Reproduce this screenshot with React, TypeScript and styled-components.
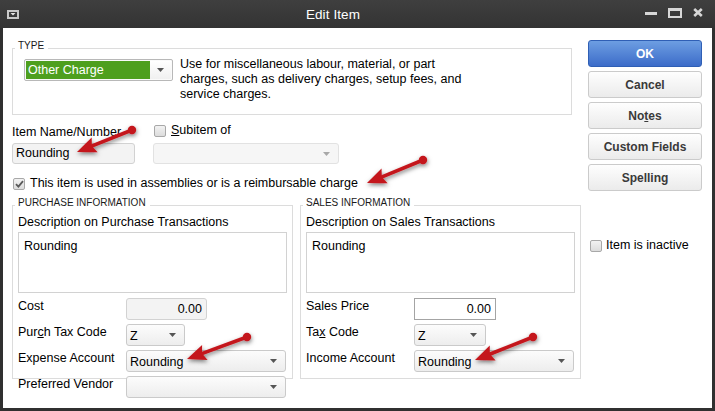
import React from "react";
import styled, { createGlobalStyle } from "styled-components";

const Global = createGlobalStyle`
  html, body { margin: 0; padding: 0; background: #ffffff; }
  body { font-family: "Liberation Sans", Arial, sans-serif; font-size: 12.5px; color: #000; }
  * { box-sizing: border-box; }
`;

const Window = styled.div`
  position: relative;
  width: 715px;
  height: 411px;
  display: flex;
  flex-direction: column;
  background: #303030;
  overflow: hidden;
`;

const TitleBar = styled.div`
  height: 28px;
  flex: none;
  display: flex;
  align-items: center;
  padding: 0 12px 0 7px;
  background: linear-gradient(#3f3f3f, #333333);
  color: #ffffff;
`;

const Title = styled.div`
  flex: 1;
  text-align: center;
  padding-left: 2px;
  font-size: 13.5px;
  letter-spacing: 0.1px;
`;

const Controls = styled.div`
  display: flex;
  align-items: center;
  gap: 11px;
`;

const Body = styled.div`
  flex: 1;
  display: flex;
  margin: 0 3px 3px 3px;
  padding-left: 9px;
  background: #ffffff;
`;

const MainCol = styled.div`
  width: 569px;
  display: flex;
  flex-direction: column;
  padding-top: 20px;
`;

const SideCol = styled.div`
  width: 114px;
  margin-left: 7px;
  padding-top: 12px;
  display: flex;
  flex-direction: column;
  gap: 4px;
`;

const Group = styled.div<{ $w: number }>`
  width: ${(p) => p.$w}px;
  border: 1px solid #dcdcdc;
  display: flex;
  flex-direction: column;
  background: #ffffff;
`;

const Legend = styled.div`
  align-self: flex-start;
  margin: -9px 0 0 2px;
  padding: 0 4px 0 3px;
  background: #ffffff;
  font-size: 10px;
  line-height: 12px;
  color: #1a1a1a;
`;

const TypeBody = styled.div`
  display: flex;
  align-items: flex-start;
  gap: 7px;
  padding: 5px 11px 12px 11px;
`;

const TypeSelect = styled.div`
  width: 149px;
  height: 22px;
  margin-top: 2px;
  flex: none;
  display: flex;
  border: 1px solid #b8b8b8;
  border-radius: 2px;
  padding: 1px;
  background: #fafafa;
`;

const TypeValue = styled.div`
  flex: 1;
  background: #4e9f1e;
  color: #ffffff;
  padding-left: 2px;
  line-height: 18px;
`;

const CaretBox = styled.div`
  width: 21px;
  display: flex;
  align-items: center;
  justify-content: center;
  background: linear-gradient(#ffffff, #f0f0f0);
`;

const TypeText = styled.div`
  line-height: 15px;
  width: 380px;
`;

const NameRow = styled.div`
  display: flex;
  gap: 18px;
  margin-top: 7px;
`;

const Col = styled.div<{ $w: number; $pt?: number }>`
  width: ${(p) => p.$w}px;
  padding-top: ${(p) => p.$pt ?? 0}px;
  display: flex;
  flex-direction: column;
`;

const Label = styled.div<{ $pt?: number }>`
  line-height: 15px;
  padding-top: ${(p) => p.$pt ?? 0}px;
  white-space: nowrap;
`;

const Field = styled.div<{ $w: number; $h?: number; $mt?: number; $right?: boolean; $white?: boolean }>`
  width: ${(p) => p.$w}px;
  height: ${(p) => p.$h ?? 22}px;
  margin-top: ${(p) => p.$mt ?? 0}px;
  border: 1px solid ${(p) => (p.$white ? "#a4a4a4" : "#d2d2d2")};
  border-radius: ${(p) => (p.$white ? 0 : 3)}px;
  background: ${(p) => (p.$white ? "#ffffff" : "#f3f3f3")};
  padding: 0 4px 0 3px;
  text-align: ${(p) => (p.$right ? "right" : "left")};
  line-height: ${(p) => (p.$h ?? 22) - 2}px;
`;

const Select = styled.div<{ $w: number; $h?: number; $mt?: number; $disabled?: boolean }>`
  width: ${(p) => p.$w}px;
  height: ${(p) => p.$h ?? 22}px;
  margin-top: ${(p) => p.$mt ?? 0}px;
  display: flex;
  align-items: center;
  justify-content: space-between;
  border: 1px solid ${(p) => (p.$disabled ? "#e2e2e2" : "#cacaca")};
  border-radius: 3px;
  background: ${(p) =>
    p.$disabled ? "#f6f6f6" : "linear-gradient(#fcfcfc, #ededed)"};
  padding: 0 8px 0 3px;
  position: relative;
`;

const SelectValue = styled.span`
  line-height: 20px;
  padding-top: 1px;
`;

const CheckRow = styled.div<{ $mt?: number; $ml?: number }>`
  display: flex;
  align-items: center;
  height: 15px;
  margin-top: ${(p) => p.$mt ?? 0}px;
  margin-left: ${(p) => p.$ml ?? 0}px;
  gap: 5px;
  white-space: nowrap;
`;

const Box = styled.span`
  width: 12px;
  height: 12px;
  margin-left: 1px;
  margin-top: 2px;
  flex: none;
  border: 1px solid #a8a8a8;
  border-radius: 2px;
  background: linear-gradient(#f2f2f2, #dcdcdc);
  display: flex;
  align-items: center;
  justify-content: center;
`;

const U = styled.span`
  text-decoration: underline;
  text-underline-offset: 1px;
`;

const GroupsRow = styled.div`
  display: flex;
  gap: 7px;
  margin-top: 15px;
`;

const InfoCol = styled.div`
  width: 281px;
  display: flex;
  flex-direction: column;
`;

const InfoBody = styled.div`
  display: flex;
  flex-direction: column;
  padding: 6px 5px 6px 5px;
`;

const TextArea = styled.div`
  height: 61px;
  margin-top: 2px;
  border: 1px solid #d2d2d2;
  padding: 6px 5px;
  line-height: 15px;
`;

const Rows = styled.div`
  display: flex;
  flex-direction: column;
  gap: 4px;
  margin-top: 5px;
`;

const FormRow = styled.div<{ $pl?: number; $mt?: number }>`
  display: grid;
  grid-template-columns: 108px 1fr;
  align-items: start;
  padding-left: ${(p) => p.$pl ?? 0}px;
  margin-top: ${(p) => p.$mt ?? 0}px;
`;

const Button = styled.div<{ $primary?: boolean }>`
  height: 27px;
  display: flex;
  align-items: center;
  justify-content: center;
  border-radius: 3px;
  border: 1px solid ${(p) => (p.$primary ? "#2f5fb5" : "#cbcbcb")};
  background: ${(p) =>
    p.$primary
      ? "linear-gradient(#6d9ee2, #3c6cc9)"
      : "linear-gradient(#fefefe, #ebebeb)"};
  color: ${(p) => (p.$primary ? "#ffffff" : "#3a3a3a")};
  font-weight: bold;
  font-size: 12px;
`;

const Overlay = styled.svg`
  position: absolute;
  left: 0;
  top: 0;
  pointer-events: none;
`;

const Caret = ({ color = "#555" }: { color?: string }) => (
  <svg width="7" height="4" viewBox="0 0 7 4">
    <path d="M0 0H7L3.5 4Z" fill={color} />
  </svg>
);

const Check = ({ checked }: { checked?: boolean }) => (
  <Box>
    {checked && (
      <svg width="9" height="8" viewBox="0 0 9 8">
        <path d="M1 4.2L3.4 6.6L8 1.2" stroke="#5a5a5a" strokeWidth="1.8" fill="none" />
      </svg>
    )}
  </Box>
);

type Arrow = { x1: number; y1: number; x2: number; y2: number };

const ARROWS: Arrow[] = [
  { x1: 132, y1: 130, x2: 77, y2: 152 },
  { x1: 423, y1: 160, x2: 367, y2: 183 },
  { x1: 247, y1: 337, x2: 187, y2: 359 },
  { x1: 533, y1: 337, x2: 475, y2: 360 },
];

const ArrowShape = ({ x1, y1, x2, y2 }: Arrow) => {
  const dx = x2 - x1;
  const dy = y2 - y1;
  const len = Math.hypot(dx, dy);
  const ux = dx / len;
  const uy = dy / len;
  const nx = -uy;
  const ny = ux;
  const hl = 19;
  const hw = 8;
  const bx = x2 - ux * hl;
  const by = y2 - uy * hl;
  const pts = `${x2},${y2} ${bx + nx * hw},${by + ny * hw} ${bx + ux * 3},${by + uy * 3} ${bx - nx * hw},${by - ny * hw}`;
  return (
    <g filter="url(#arrowShadow)">
      <line x1={x1} y1={y1} x2={bx + ux * 4} y2={by + uy * 4} stroke="#c4161c" strokeWidth="3.6" strokeLinecap="round" />
      <circle cx={x1} cy={y1} r="4.2" fill="#c4161c" />
      <polygon points={pts} fill="#c4161c" />
    </g>
  );
};

export default function App() {
  return (
    <>
      <Global />
      <Window>
        <TitleBar>
          <svg width="12" height="9" viewBox="0 0 12 9">
            <rect x="0" y="0" width="12" height="9" fill="#c9c9c9" />
            <rect x="2" y="2" width="8" height="5" fill="#3a3a3a" />
            <path d="M3.5 3H8.5L6 5.5Z" fill="#e6e6e6" />
          </svg>
          <Title>Edit Item</Title>
          <Controls>
            <svg width="12" height="3" viewBox="0 0 12 3" style={{ marginTop: -2 }}>
              <rect width="12" height="3" fill="#d6d6d6" />
            </svg>
            <svg width="14" height="10" viewBox="0 0 14 10" style={{ marginTop: -2 }}>
              <rect x="1" y="1.5" width="12" height="7.5" fill="none" stroke="#d6d6d6" strokeWidth="2" />
              <rect x="0" y="0" width="14" height="3" fill="#d6d6d6" />
            </svg>
            <svg width="10" height="9" viewBox="0 0 10 9" style={{ marginTop: -3 }}>
              <path d="M1.2 1L8.8 8M8.8 1L1.2 8" stroke="#d6d6d6" strokeWidth="2.6" />
            </svg>
          </Controls>
        </TitleBar>
        <Body>
          <MainCol>
            <Group $w={560}>
              <Legend>TYPE</Legend>
              <TypeBody>
                <TypeSelect>
                  <TypeValue>Other Charge</TypeValue>
                  <CaretBox>
                    <Caret />
                  </CaretBox>
                </TypeSelect>
                <TypeText>
                  Use for miscellaneous labour, material, or part
                  <br />
                  charges, such as delivery charges, setup fees, and
                  <br />
                  service charges.
                </TypeText>
              </TypeBody>
            </Group>

            <NameRow>
              <Col $w={123} $pt={3}>
                <Label>Item Name/Number</Label>
                <Field $w={123} $h={21} $mt={3}>Rounding</Field>
              </Col>
              <Col $w={186}>
                <CheckRow>
                  <Check />
                  <span>
                    <U>S</U>ubitem of
                  </span>
                </CheckRow>
                <Select $w={186} $h={21} $mt={6} $disabled>
                  <span />
                  <Caret color="#a8a8a8" />
                </Select>
              </Col>
            </NameRow>

            <CheckRow $mt={11}>
              <Check checked />
              <span>This item is used in assemblies or is a reimbursable charge</span>
            </CheckRow>

            <GroupsRow>
              <InfoCol>
                <Group $w={281}>
                  <Legend>PURCHASE INFORMATION</Legend>
                  <InfoBody>
                    <Label>Description on Purchase Transactions</Label>
                    <TextArea>Rounding</TextArea>
                    <Rows>
                      <FormRow>
                        <Label $pt={1}>Cost</Label>
                        <Field $w={81} $right>0.00</Field>
                      </FormRow>
                      <FormRow>
                        <Label $pt={1}>
                          Pur<U>c</U>h Tax Code
                        </Label>
                        <Select $w={59}>
                          <SelectValue>Z</SelectValue>
                          <Caret />
                        </Select>
                      </FormRow>
                      <FormRow>
                        <Label $pt={1}>Expense Account</Label>
                        <Select $w={160}>
                          <SelectValue>Rounding</SelectValue>
                          <Caret />
                        </Select>
                      </FormRow>
                    </Rows>
                  </InfoBody>
                </Group>
                <FormRow $pl={6} $mt={-3}>
                  <Label $pt={1}>Preferred Vendor</Label>
                  <Select $w={160}>
                    <span />
                    <Caret />
                  </Select>
                </FormRow>
              </InfoCol>

              <InfoCol>
                <Group $w={281}>
                  <Legend>SALES INFORMATION</Legend>
                  <InfoBody>
                    <Label>Description on Sales Transactions</Label>
                    <TextArea>Rounding</TextArea>
                    <Rows>
                      <FormRow>
                        <Label $pt={1}>Sales Price</Label>
                        <Field $w={82} $right $white>0.00</Field>
                      </FormRow>
                      <FormRow>
                        <Label $pt={1}>
                          Ta<U>x</U> Code
                        </Label>
                        <Select $w={72}>
                          <SelectValue>Z</SelectValue>
                          <Caret />
                        </Select>
                      </FormRow>
                      <FormRow>
                        <Label $pt={1}>Income Account</Label>
                        <Select $w={160}>
                          <SelectValue>Rounding</SelectValue>
                          <Caret />
                        </Select>
                      </FormRow>
                    </Rows>
                  </InfoBody>
                </Group>
              </InfoCol>
            </GroupsRow>
          </MainCol>

          <SideCol>
            <Button $primary>OK</Button>
            <Button>Cancel</Button>
            <Button>
              <span>
                No<U>t</U>es
              </span>
            </Button>
            <Button>Custom Fields</Button>
            <Button>
              <span>
                Spellin<U>g</U>
              </span>
            </Button>
            <CheckRow $mt={42} $ml={1}>
              <Check />
              <span style={{ marginLeft: -1 }}>Item is inactive</span>
            </CheckRow>
          </SideCol>
        </Body>

        <Overlay width="715" height="411" viewBox="0 0 715 411">
          <defs>
            <filter id="arrowShadow" x="-30%" y="-50%" width="160%" height="200%">
              <feDropShadow dx="0.5" dy="2" stdDeviation="2" floodColor="#000" floodOpacity="0.5" />
            </filter>
          </defs>
          {ARROWS.map((a, i) => (
            <ArrowShape key={i} {...a} />
          ))}
        </Overlay>
      </Window>
    </>
  );
}
